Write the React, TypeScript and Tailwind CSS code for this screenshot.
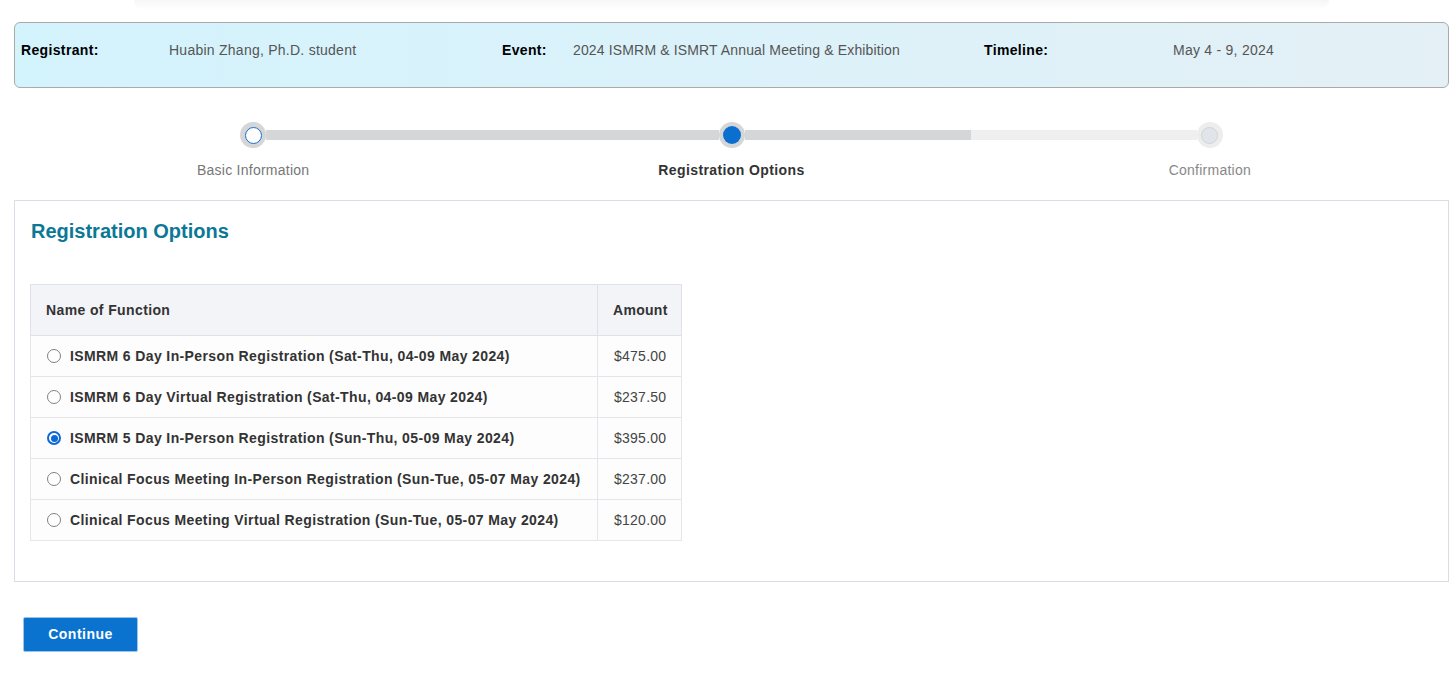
import React from "react";

const rows = [
  { name: "ISMRM 6 Day In-Person Registration (Sat-Thu, 04-09 May 2024)", amount: "$475.00", checked: false },
  { name: "ISMRM 6 Day Virtual Registration (Sat-Thu, 04-09 May 2024)", amount: "$237.50", checked: false },
  { name: "ISMRM 5 Day In-Person Registration (Sun-Thu, 05-09 May 2024)", amount: "$395.00", checked: true },
  { name: "Clinical Focus Meeting In-Person Registration (Sun-Tue, 05-07 May 2024)", amount: "$237.00", checked: false },
  { name: "Clinical Focus Meeting Virtual Registration (Sun-Tue, 05-07 May 2024)", amount: "$120.00", checked: false },
];

function Radio({ checked }: { checked: boolean }) {
  if (checked) {
    return (
      <span className="flex h-[14px] w-[14px] shrink-0 items-center justify-center rounded-full border-[2px] border-[#0b68d4] bg-white">
        <span className="h-[7px] w-[7px] rounded-full bg-[#0b68d4]" />
      </span>
    );
  }
  return <span className="h-[14px] w-[14px] shrink-0 rounded-full border-[1.5px] border-[#808087] bg-white" />;
}

export default function App() {
  return (
    <div
      className="min-h-[679px] bg-white pl-[14px] text-[14px] tracking-[0.25px] text-[#333]"
      style={{ fontFamily: '"Liberation Sans", Arial, sans-serif' }}
    >
      <div className="mx-[120px] h-[10px] rounded-b-[40px] bg-gradient-to-b from-[#f6f6f6] to-white" />
      {/* Header */}
      <div className="mt-[12px] flex h-[66px] rounded-[6px] border border-[#aaaaaa] bg-gradient-to-r from-[#d3f3fd] to-[#e4f0f6] pl-[6px] pt-[17px]">
        <div className="flex w-[481px]">
          <div className="w-[148px] font-bold tracking-[0.35px] text-black">Registrant:</div>
          <div className="text-[#555]">Huabin Zhang, Ph.D. student</div>
        </div>
        <div className="flex w-[482px]">
          <div className="w-[71px] font-bold tracking-[0.35px] text-black">Event:</div>
          <div className="tracking-[0.15px] text-[#555]">2024 ISMRM &amp; ISMRT Annual Meeting &amp; Exhibition</div>
        </div>
        <div className="flex">
          <div className="w-[189px] font-bold tracking-[0.35px] text-black">Timeline:</div>
          <div className="text-[#555]">May 4 - 9, 2024</div>
        </div>
      </div>

      {/* Stepper */}
      <div className="mt-[34px] grid grid-cols-3">
        <div className="flex flex-col items-center">
          <div className="flex w-full items-center">
            <div className="h-[10px] flex-1" />
            <div className="flex h-[26px] w-[26px] items-center justify-center rounded-full bg-[#d5d6d8]">
              <div className="h-[17px] w-[17px] rounded-full border-[1.5px] border-[#1a6fcc] bg-white" />
            </div>
            <div className="h-[10px] flex-1 bg-[#d5d6d8]" />
          </div>
          <div className="mt-[12px] text-[#777]">Basic Information</div>
        </div>
        <div className="flex flex-col items-center">
          <div className="flex w-full items-center">
            <div className="h-[10px] flex-1 bg-[#d5d6d8]" />
            <div className="flex h-[26px] w-[26px] items-center justify-center rounded-full bg-[#d5d6d8]">
              <div className="h-[18px] w-[18px] rounded-full bg-[#0a6fcf]" />
            </div>
            <div className="h-[10px] flex-1 bg-[#d5d6d8]" />
          </div>
          <div className="mt-[12px] font-bold tracking-[0.4px] text-[#333]">Registration Options</div>
        </div>
        <div className="flex flex-col items-center">
          <div className="flex w-full items-center">
            <div className="h-[10px] flex-1 bg-[#efefef]" />
            <div className="flex h-[26px] w-[26px] items-center justify-center rounded-full bg-[#ededed]">
              <div className="h-[17px] w-[17px] rounded-full border border-[#cdd4dc] bg-[#e1e5ea]" />
            </div>
            <div className="h-[10px] flex-1" />
          </div>
          <div className="mt-[12px] text-[#888]">Confirmation</div>
        </div>
      </div>

      {/* Card */}
      <div className="mt-[19px] border border-[#d8dee6] px-[15px] pb-[40px] pt-[18px]">
        <h2 className="pl-[1px] text-[20px] font-bold leading-[24px] tracking-normal text-[#0b7896]">Registration Options</h2>
        <table className="mt-[41px] table-fixed border-collapse">
          <colgroup>
            <col className="w-[567px]" />
            <col className="w-[84px]" />
          </colgroup>
          <thead>
            <tr className="h-[51px] bg-[#f2f4f8]">
              <th className="border border-[#dde1e8] pl-[15px] text-left font-bold tracking-[0.38px] text-[#333]">Name of Function</th>
              <th className="border border-[#dde1e8] pl-[15px] text-left font-bold tracking-[0.3px] text-[#333]">Amount</th>
            </tr>
          </thead>
          <tbody>
            {rows.map((r) => (
              <tr key={r.name} className="h-[41px] bg-[#fdfdfd]">
                <td className="border border-[#e3e6ea] pl-[16px]">
                  <div className="flex items-center gap-[9px] whitespace-nowrap">
                    <Radio checked={r.checked} />
                    <span className="font-bold tracking-[0.38px] text-[#333]">{r.name}</span>
                  </div>
                </td>
                <td className="whitespace-nowrap border border-[#e3e6ea] pl-[16px] text-[#444]">{r.amount}</td>
              </tr>
            ))}
          </tbody>
        </table>
      </div>

      <div className="ml-[9px] mt-[35px]">
        <button className="h-[35px] w-[115px] rounded-[2px] border border-[#9cc3e8] bg-[#0a73cf] font-bold tracking-[0.5px] text-white">
          Continue
        </button>
      </div>
    </div>
  );
}
